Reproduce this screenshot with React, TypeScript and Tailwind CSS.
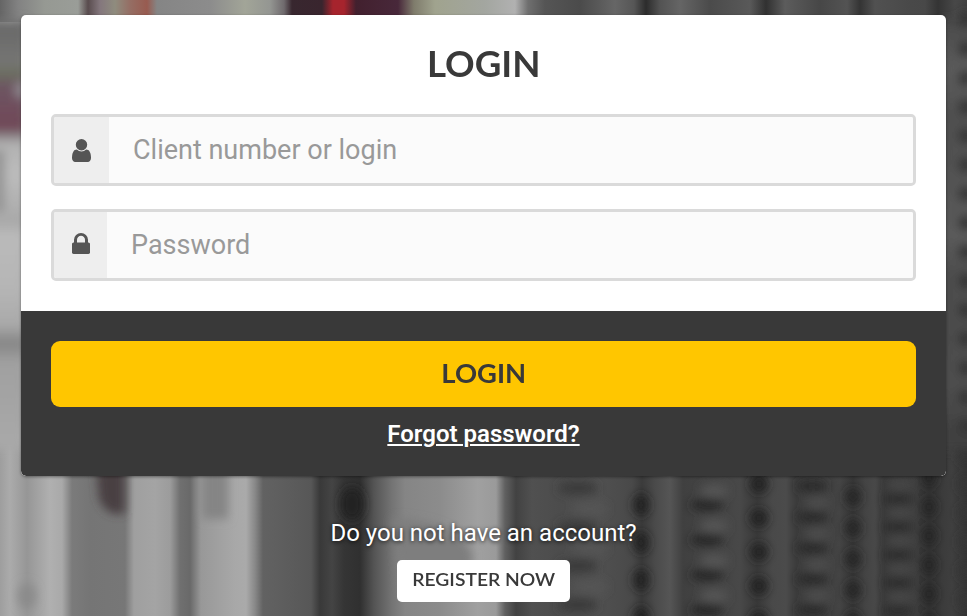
import React from "react";

type Stop = [number, string];

const BOTTOM: Stop[] = [
  [0, "#9e9e9e"], [10, "#ababab"], [27, "#969696"], [50, "#b0b0b0"], [62, "#a9a9a9"], [72, "#7b7b7b"],
  [90, "#757575"], [125, "#777777"], [134, "#9f9f9f"], [155, "#a4a4a4"], [170, "#9c9c9c"], [180, "#707070"],
  [190, "#696969"], [201, "#989898"], [235, "#a8a8a8"], [246, "#aaaaaa"], [255, "#888888"], [263, "#626262"],
  [290, "#5c5c5c"], [311, "#575757"], [320, "#393939"], [332, "#444444"], [344, "#353535"], [360, "#303030"],
  [374, "#545454"], [392, "#747474"], [405, "#858585"], [440, "#8c8c8c"], [478, "#a0a0a0"], [496, "#9a9a9a"],
  [505, "#606060"], [516, "#424242"], [532, "#505050"], [560, "#4c4c4c"], [600, "#505050"], [632, "#494949"],
  [642, "#3b3b3b"], [655, "#4a4a4a"], [670, "#555555"], [683, "#404040"], [712, "#444444"], [740, "#484848"],
  [757, "#3a3a3a"], [772, "#494949"], [786, "#4b4b4b"], [796, "#3c3c3c"], [840, "#444444"], [853, "#373737"],
  [865, "#444444"], [875, "#484848"], [884, "#393939"], [915, "#3e3e3e"], [929, "#303030"], [942, "#3b3b3b"],
  [952, "#3f3f3f"], [967, "#333333"],
];

const TOP: Stop[] = [
  [0, "#656565"], [18, "#828282"], [45, "#969993"], [78, "#9a9d98"], [88, "#594c4e"], [100, "#84777d"],
  [115, "#8f8c7e"], [130, "#956e64"], [147, "#985b50"], [157, "#858585"], [210, "#8c8c8c"], [245, "#a2a598"],
  [270, "#949692"], [284, "#6f6a6d"], [292, "#38272f"], [322, "#39252e"], [333, "#a6242d"], [344, "#a6242d"],
  [356, "#42202e"], [398, "#48283a"], [414, "#7f7c6c"], [435, "#a0a38e"], [485, "#a3a6a0"], [515, "#b1b1b1"],
  [528, "#6f6f6f"], [545, "#555555"], [580, "#4b4b4b"], [615, "#666666"], [634, "#565656"], [646, "#2c2c2c"],
  [660, "#535353"], [680, "#656565"], [710, "#4b4b4b"], [750, "#595959"], [766, "#313131"], [785, "#5c5c5c"],
  [820, "#474747"], [847, "#535353"], [860, "#343434"], [875, "#515151"], [910, "#494949"], [925, "#484848"],
  [938, "#343434"], [955, "#484848"], [967, "#414141"],
];

const LEFT: Stop[] = [
  [0, "#6e6e6e"], [14, "#818181"], [28, "#696969"], [62, "#757573"], [74, "#6b6e60"], [86, "#6d5562"],
  [128, "#704757"], [136, "#8b8487"], [144, "#b2b2b2"], [175, "#bcbcbc"], [210, "#aeaeae"], [222, "#a8a8a8"],
  [235, "#bababa"], [290, "#b5b5b5"], [325, "#a9a9a9"], [343, "#858585"], [362, "#a0a0a0"], [440, "#a8a8a8"],
  [616, "#a3a3a3"],
];

const RIGHT: Stop[] = [
  [0, "#454545"], [25, "#4c4c4c"], [70, "#5b5b5b"], [115, "#505050"], [165, "#515151"], [235, "#5b5b5b"],
  [275, "#4d4d4d"], [340, "#4c4c4c"], [385, "#4e4e4e"], [430, "#414141"], [616, "#393939"],
];

function Ramp({ id, stops, size, vertical }: { id: string; stops: Stop[]; size: number; vertical?: boolean }) {
  return (
    <linearGradient id={id} gradientUnits="userSpaceOnUse" x1="0" y1="0" x2={vertical ? 0 : size} y2={vertical ? size : 0}>
      {stops.map(([at, color]) => (
        <stop key={at} offset={at / size} stopColor={color} />
      ))}
    </linearGradient>
  );
}

/* Blurred perforations of the server rack: x, first y, spacing, radii, color */
const HOLES: [number, number, number, number, number, string][] = [
  [641, 505, 37.5, 8, 11, "#202020"],
  [759, 484, 34, 9, 9, "#222222"],
  [853, 497, 31, 8, 9, "#262626"],
  [929, 478, 29, 7, 9, "#282828"],
  [707, 505, 35, 17, 6, "#282828"],
  [812, 486, 31, 16, 6, "#2a2a2a"],
  [898, 499, 28, 15, 6, "#2e2e2e"],
  [714, 491, 35, 14, 7, "#545454"],
  [817, 503, 31, 12, 6, "#4d4d4d"],
  [900, 485, 28, 13, 6, "#464646"],
  [578, 488, 39, 20, 7, "#3b3b3b"],
  [590, 509, 39, 17, 7, "#555555"],
  [966, 20, 29, 8, 8, "#363636"],
];

function Backdrop() {
  return (
    <svg className="absolute inset-0 h-full w-full" viewBox="0 0 967 616" aria-hidden="true">
      <defs>
        <Ramp id="bottom" stops={BOTTOM} size={967} />
        <Ramp id="top" stops={TOP} size={967} />
        <Ramp id="left" stops={LEFT} size={616} vertical />
        <Ramp id="right" stops={RIGHT} size={616} vertical />
        <filter id="soft" x="-50%" y="-50%" width="200%" height="200%"><feGaussianBlur stdDeviation="5" /></filter>
      </defs>
      <rect width="967" height="616" fill="url(#bottom)" />
      <rect width="967" height="22" fill="url(#top)" />
      <g filter="url(#soft)">
        <rect x="-20" y="20" width="46" height="430" fill="url(#left)" />
        <rect x="941" y="20" width="46" height="430" fill="url(#right)" />
        <path d="M95 455h30v58q-18 5-26-14z" fill="#494043" />
        <path d="M202 455h26v64h-26z" fill="#858585" />
        <path d="M392 518q60 2 80 34v40h-70z" fill="#7e7e7e" />
        <ellipse cx="352" cy="504" rx="12" ry="17" fill="#202020" />
        <ellipse cx="27" cy="596" rx="9" ry="13" fill="#8b8b8b" />
        <ellipse cx="20" cy="90" rx="6" ry="9" fill="#898087" />
        <path d="M-8 150h13v62H-8z" fill="#969696" />
        {HOLES.map(([x, y, step, rx, ry, color], column) =>
          Array.from({ length: Math.ceil((625 - y) / step) }, (_, i) => (
            <ellipse key={`${column}-${i}`} cx={x} cy={y + i * step} rx={rx} ry={ry} fill={color} />
          )),
        )}
      </g>
    </svg>
  );
}

function UserIcon() {
  return (
    <svg className="h-[23px] w-[19px] fill-[#555]" viewBox="256 128 1280 1536" preserveAspectRatio="none">
      <path d="M1536 1399q0 109-62.5 187t-150.5 78h-854q-88 0-150.5-78t-62.5-187q0-85 8.5-160.5t31.5-152 58.5-131 94-89 134.5-34.5q131 128 313 128t313-128q76 0 134.5 34.5t94 89 58.5 131 31.5 152 8.5 160.5zm-256-887q0 159-112.5 271.5t-271.5 112.5-271.5-112.5-112.5-271.5 112.5-271.5 271.5-112.5 271.5 112.5 112.5 271.5z" />
    </svg>
  );
}

function LockIcon() {
  return (
    <svg className="mb-[3px] h-[21px] w-[18px] fill-[#555]" viewBox="0 128 1152 1408" preserveAspectRatio="none">
      <path d="M320 768h512v-192q0-106-75-181t-181-75-181 75-75 181v192zm832 96v576q0 40-28 68t-68 28h-960q-40 0-68-28t-28-68v-576q0-40 28-68t68-28h32v-192q0-184 132-316t316-132 316 132 132 316v192h32q40 0 68 28t28 68z" />
    </svg>
  );
}

const inputClass =
  "min-w-0 flex-1 bg-[#fbfbfb] pl-6 pr-6 text-[27px] text-[#444] outline-none placeholder:text-[#999] placeholder:opacity-100";

export default function App() {
  return (
    <div className="relative h-[616px] w-[967px] overflow-hidden bg-[#555] font-['Roboto',sans-serif]">
      <Backdrop />
      <main className="relative flex flex-col items-center px-[21px] pt-[15px]">
        <form className="w-full overflow-hidden rounded-[5px] bg-white shadow-[0_1px_3px_rgba(0,0,0,0.4)]">
          <div className="flex h-[296px] flex-col px-[30px]">
            <h1 className="flex h-[99px] items-center justify-center pb-[3px] font-['Lato',sans-serif] text-[36px] font-bold text-[#393939]">
              <span className="scale-x-[1.02]">LOGIN</span>
            </h1>
            <label className="flex h-[72px] overflow-hidden rounded-[5px] border-[3px] border-[#dadada]">
              <span className="flex w-[55px] items-center justify-center bg-[#eee]"><UserIcon /></span>
              <input className={inputClass} placeholder="Client number or login" />
            </label>
            <label className="mt-[23px] flex h-[72px] overflow-hidden rounded-[5px] border-[3px] border-[#dadada]">
              <span className="flex w-[53px] items-center justify-center bg-[#eee]"><LockIcon /></span>
              <input className={inputClass} type="password" placeholder="Password" />
            </label>
          </div>
          <div className="flex h-[165px] flex-col items-center rounded-b-[5px] bg-[#393939] px-[30px] pt-[30px]">
            <button type="button" className="h-[66px] w-full rounded-[9px] bg-[#ffc600] pb-0.5 font-['Lato',sans-serif] text-[27px] font-bold text-[#393939]">
              <span className="inline-block scale-x-[1.015]">LOGIN</span>
            </button>
            <a href="#" className="mt-3 text-[24px] leading-[30px] font-semibold text-white underline">Forgot password?</a>
          </div>
        </form>
        <p className="mt-[42px] text-[24px] leading-[30px] text-white [text-shadow:0_1px_4px_rgba(0,0,0,0.8)]">Do you not have an account?</p>
        <button type="button" className="mt-[12px] h-[42px] w-[173px] rounded-[5px] bg-white pb-1 font-['Lato',sans-serif] text-[18px] font-semibold whitespace-nowrap text-[#393939]">
          <span className="inline-block scale-x-[1.07]">REGISTER NOW</span>
        </button>
      </main>
    </div>
  );
}
